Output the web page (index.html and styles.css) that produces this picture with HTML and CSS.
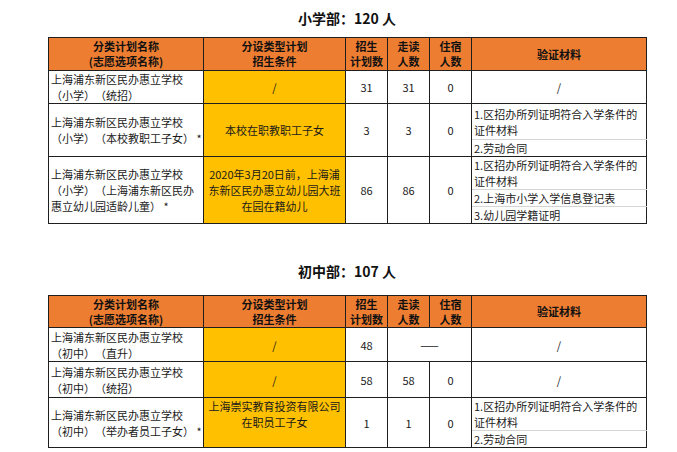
FILE: index.html
```html
<!DOCTYPE html>
<html lang="zh-CN">
<head>
<meta charset="utf-8">
<title>招生计划</title>
<link rel="stylesheet" href="styles.css">
</head>
<body>
<div class="sheet">
  <div class="title first">小学部：120 人</div>
  <table class="plan">
    <colgroup>
      <col class="c1"><col class="c2"><col class="c3"><col class="c4"><col class="c5"><col class="c6">
    </colgroup>
    <tr class="hd h33">
      <th>分类计划名称<br>(志愿选项名称)</th>
      <th>分设类型计划<br>招生条件</th>
      <th>招生<br>计划数</th>
      <th>走读<br>人数</th>
      <th>住宿<br>人数</th>
      <th>验证材料</th>
    </tr>
    <tr class="h33">
      <td class="name">上海浦东新区民办惠立学校<br>（小学）（统招）</td>
      <td class="cond">/</td>
      <td class="num">31</td>
      <td class="num">31</td>
      <td class="num">0</td>
      <td class="num">/</td>
    </tr>
    <tr class="h36">
      <td class="name" rowspan="2">上海浦东新区民办惠立学校<br>（小学）（本校教职工子女） *</td>
      <td class="cond" rowspan="2">本校在职教职工子女</td>
      <td class="num" rowspan="2">3</td>
      <td class="num" rowspan="2">3</td>
      <td class="num" rowspan="2">0</td>
      <td class="doc sub">1.区招办所列证明符合入学条件的<br>证件材料</td>
    </tr>
    <tr class="h16">
      <td class="doc">2.劳动合同</td>
    </tr>
    <tr class="h32">
      <td class="name" rowspan="3">上海浦东新区民办惠立学校<br>（小学）（上海浦东新区民办<br>惠立幼儿园适龄儿童） *</td>
      <td class="cond" rowspan="3">2020年3月20日前，上海浦<br>东新区民办惠立幼儿园大班<br>在园在籍幼儿</td>
      <td class="num" rowspan="3">86</td>
      <td class="num" rowspan="3">86</td>
      <td class="num" rowspan="3">0</td>
      <td class="doc sub">1.区招办所列证明符合入学条件的<br>证件材料</td>
    </tr>
    <tr class="h17">
      <td class="doc sub">2.上海市小学入学信息登记表</td>
    </tr>
    <tr class="h16">
      <td class="doc">3.幼儿园学籍证明</td>
    </tr>
  </table>

  <div class="title second">初中部：107 人</div>
  <table class="plan">
    <colgroup>
      <col class="c1"><col class="c2"><col class="c3"><col class="c4"><col class="c5"><col class="c6">
    </colgroup>
    <tr class="hd h32">
      <th>分类计划名称<br>(志愿选项名称)</th>
      <th>分设类型计划<br>招生条件</th>
      <th>招生<br>计划数</th>
      <th>走读<br>人数</th>
      <th>住宿<br>人数</th>
      <th>验证材料</th>
    </tr>
    <tr class="h34">
      <td class="name">上海浦东新区民办惠立学校<br>（初中）（直升）</td>
      <td class="cond">/</td>
      <td class="num">48</td>
      <td class="num" colspan="2">——</td>
      <td class="num">/</td>
    </tr>
    <tr class="h36">
      <td class="name">上海浦东新区民办惠立学校<br>（初中）（统招）</td>
      <td class="cond">/</td>
      <td class="num">58</td>
      <td class="num">58</td>
      <td class="num">0</td>
      <td class="num">/</td>
    </tr>
    <tr class="h32">
      <td class="name" rowspan="2">上海浦东新区民办惠立学校<br>（初中）（举办者员工子女） *</td>
      <td class="cond top" rowspan="2">上海崇实教育投资有限公司<br>在职员工子女</td>
      <td class="num" rowspan="2">1</td>
      <td class="num" rowspan="2">1</td>
      <td class="num" rowspan="2">0</td>
      <td class="doc sub">1.区招办所列证明符合入学条件的<br>证件材料</td>
    </tr>
    <tr class="h16">
      <td class="doc">2.劳动合同</td>
    </tr>
  </table>
</div>
</body>
</html>
```

FILE: styles.css
```css
html, body {
  margin: 0;
  padding: 0;
  background: #ffffff;
}

body {
  font-family: "Noto Sans CJK SC", "Noto Sans", sans-serif;
  color: #1a1a1a;
  width: 677px;
  height: 452px;
  overflow: hidden;
  text-spacing-trim: space-all;
}

.sheet {
  padding-left: 48px;
  width: 598px;
}

.title {
  text-align: center;
  font-weight: bold;
  font-size: 14px;
  color: #111;
}

.title.first {
  height: 37px;
  line-height: 37px;
}

.title.second {
  padding-top: 23px;
  height: 48px;
  line-height: 48px;
}

.plan {
  border-collapse: collapse;
  table-layout: fixed;
  width: 598px;
  font-size: 11px;
  line-height: 16px;
}

.c1 { width: 155px; }
.c2 { width: 142px; }
.c3 { width: 42px; }
.c4 { width: 42px; }
.c5 { width: 42px; }
.c6 { width: 175px; }

.plan th,
.plan td {
  border: 1px solid #1f1f1f;
  padding: 0 2px;
  vertical-align: middle;
  overflow: hidden;
}

.plan th {
  background: #ed7d31;
  font-weight: bold;
  line-height: 15px;
  text-align: center;
  color: #111;
}

.h33 { height: 33px; }
.h32 { height: 32px; }
.h34 { height: 34px; }
.h36 { height: 36px; }
.h17 { height: 17px; }
.h16 { height: 16px; }

.name {
  text-align: left;
  white-space: nowrap;
}

.cond {
  background: #ffc000;
  text-align: center;
  white-space: nowrap;
}

.cond.top {
  vertical-align: top;
}

.num {
  text-align: center;
}

.doc {
  text-align: left;
  white-space: nowrap;
}

.plan td.doc.sub {
  border-bottom: 1px solid #d4d4d4;
}
```
